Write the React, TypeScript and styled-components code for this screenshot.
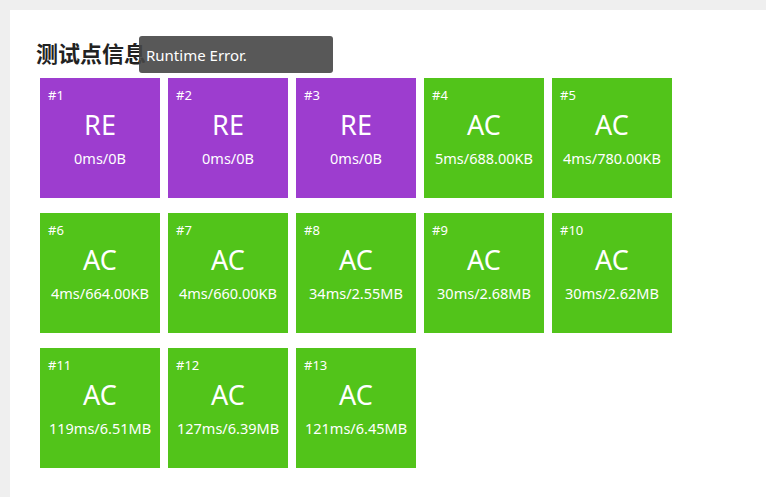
import React from "react";
import styled, { createGlobalStyle } from "styled-components";

const Global = createGlobalStyle`
  html, body { margin: 0; padding: 0; background: #efefef; }
  body { font-family: "Noto Sans", "Noto Sans CJK SC", sans-serif; }
`;

const Panel = styled.div`
  position: relative;
  margin: 10px 0 0 10px;
  min-height: 487px;
  background: #fff;
  padding: 26px 26px 0 26px;
  box-sizing: border-box;
`;

const Title = styled.h3`
  margin: 0 0 10px 0;
  font-family: "Noto Sans CJK SC", sans-serif;
  font-size: 22px;
  line-height: 32px;
  font-weight: 700;
  color: #222;
`;

const Tooltip = styled.div`
  position: absolute;
  left: 129px;
  top: 26px;
  width: 194px;
  height: 37px;
  box-sizing: border-box;
  padding: 0 7px;
  background: rgba(70, 70, 70, 0.9);
  border-radius: 3px;
  color: #fff;
  font-size: 15px;
  line-height: 38px;
`;

const Grid = styled.div`
  display: flex;
  flex-wrap: wrap;
  gap: 15px 8px;
  padding-left: 4px;
  width: 632px;
`;

const Tile = styled.div<{ $bg: string }>`
  width: 120px;
  height: 120px;
  box-sizing: border-box;
  background: ${(p) => p.$bg};
  color: #fff;
  padding: 8px 0 0 8px;
  display: flex;
  flex-direction: column;
`;

const Label = styled.div`
  font-size: 13px;
  line-height: 18px;
  height: 18px;
`;

const Status = styled.div`
  margin: 4px 8px 0 0;
  text-align: center;
  font-size: 27px;
  line-height: 34px;
`;

const Usage = styled.div`
  margin: 0 8px 0 0;
  text-align: center;
  font-size: 14.5px;
  line-height: 32px;
  white-space: nowrap;
`;

const COLORS: Record<string, string> = { RE: "#9d3dcf", AC: "#52c41a" };

const cases: [string, string][] = [
  ["RE", "0ms/0B"],
  ["RE", "0ms/0B"],
  ["RE", "0ms/0B"],
  ["AC", "5ms/688.00KB"],
  ["AC", "4ms/780.00KB"],
  ["AC", "4ms/664.00KB"],
  ["AC", "4ms/660.00KB"],
  ["AC", "34ms/2.55MB"],
  ["AC", "30ms/2.68MB"],
  ["AC", "30ms/2.62MB"],
  ["AC", "119ms/6.51MB"],
  ["AC", "127ms/6.39MB"],
  ["AC", "121ms/6.45MB"],
];

export default function App() {
  return (
    <>
      <Global />
      <Panel>
        <Title>测试点信息</Title>
        <Grid>
          {cases.map(([s, u], i) => (
            <Tile key={i} $bg={COLORS[s]}>
              <Label>#{i + 1}</Label>
              <Status>{s}</Status>
              <Usage>{u}</Usage>
            </Tile>
          ))}
        </Grid>
        <Tooltip>Runtime Error.</Tooltip>
      </Panel>
    </>
  );
}
